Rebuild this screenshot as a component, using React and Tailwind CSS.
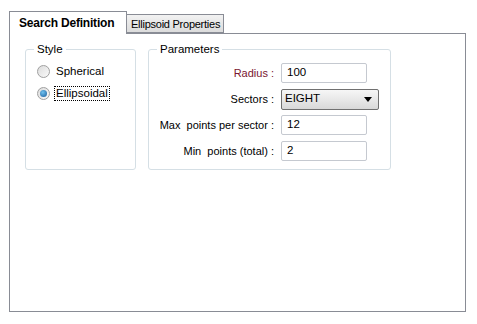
const font = { fontFamily: '"Liberation Sans", Tahoma, sans-serif' };

const Radio = ({ checked, label, focused }) => (
  <div className="flex items-center h-[13px]">
    <span className="w-[13px] h-[13px] rounded-full border border-[#a0a0a0] bg-gradient-to-br from-[#dcdcdc] to-[#fafafa] flex items-center justify-center">
      {checked && (
        <span className="w-[7px] h-[7px] rounded-full bg-[radial-gradient(circle_at_40%_35%,#6fc0ee,#1a5d9c)]" />
      )}
    </span>
    <span
      className={
        "ml-[4px] px-[1px] leading-[13px] text-[11.5px] text-black whitespace-nowrap " +
        (focused ? "border border-dotted border-black" : "border border-transparent")
      }
    >
      {label}
    </span>
  </div>
);

const Group = ({ title, className, children }) => (
  <div className={"relative border border-[#d5dfe5] rounded-[3px] " + className}>
    <span className="absolute -top-[8px] left-[8px] bg-white px-[3px] text-[11.5px] leading-[14px] text-black whitespace-nowrap">
      {title}
    </span>
    {children}
  </div>
);

const Field = ({ label, value, red }) => (
  <div className="flex items-center h-[20px]">
    <span className={"w-[127px] text-right pr-[7px] text-[11px] whitespace-pre " + (red ? "text-[#7a1530]" : "text-black")}>
      {label}
    </span>
    <div className="w-[86px] h-[20px] border border-[#c5c9d0] rounded-[2px] bg-white flex items-center pl-[5px] text-[11.5px] text-black">
      {value}
    </div>
  </div>
);

export default function App() {
  return (
    <div className="w-[477px] h-[324px] bg-white pt-[10px] pl-[9px]" style={font}>
      <div className="flex items-end h-[23px]">
        <div className="relative z-10 w-[118px] h-[23px] -mb-px border border-b-0 border-[#898c95] bg-white pl-[9px] pt-[4px] text-[12px] tracking-[-0.2px] font-bold text-black leading-[14px] whitespace-nowrap">
          Search Definition
        </div>
        <div className="w-[97px] h-[19px] border border-l-0 border-[#898c95] bg-gradient-to-b from-[#f2f2f2] to-[#dcdcdc] pl-[4px] pt-[2px] text-[11px] tracking-[-0.25px] text-black leading-[14px] whitespace-nowrap">
          Ellipsoid Properties
        </div>
      </div>
      <div className="w-[457px] h-[279px] border border-[#898c95] pt-[15px] pl-[15px] flex gap-[12px]">
        <Group title="Style" className="w-[111px] h-[121px] pt-[15px] pl-[11px]">
          <div className="flex flex-col gap-[9px]">
            <Radio label="Spherical" />
            <Radio label="Ellipsoidal" checked focused />
          </div>
        </Group>
        <Group title="Parameters" className="w-[243px] h-[121px] pt-[13px] pl-[5px]">
          <div className="flex flex-col gap-[6px]">
            <Field label="Radius :" value="100" red />
            <div className="flex items-center h-[20px]">
              <span className="w-[127px] text-right pr-[7px] text-[11px] text-black">Sectors :</span>
              <div className="w-[98px] h-[21px] border border-[#707070] rounded-[2px] bg-gradient-to-b from-[#f6f6f6] via-[#e8e8e8] to-[#d8d8d8] flex items-center justify-between pl-[3px] pr-[6px] text-[11.5px] text-black">
                <span>EIGHT</span>
                <svg width="8" height="5" viewBox="0 0 8 5">
                  <path d="M0 0h8L4 5z" fill="#000" />
                </svg>
              </div>
            </div>
            <Field label="Max  points per sector :" value="12" />
            <Field label="Min  points (total) :" value="2" />
          </div>
        </Group>
      </div>
    </div>
  );
}
